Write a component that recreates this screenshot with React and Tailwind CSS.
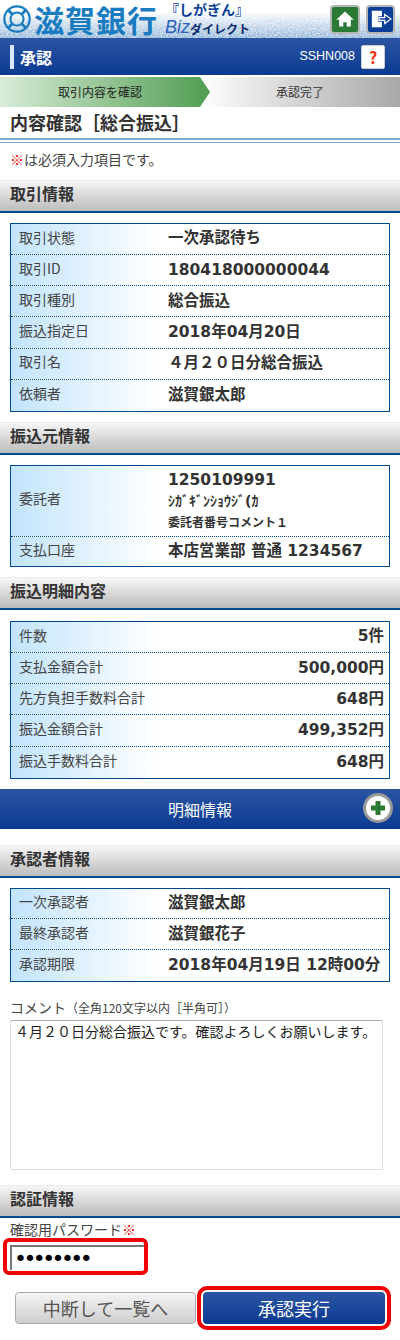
const Section = ({ title, className = "" }) => (
  <h2
    className={`h-[33px] border-t border-[#ececec] border-b-2 border-b-[#004a8f] bg-gradient-to-b from-[#f6f6f6] to-[#bcbcbc] pl-[10px] text-[16px] leading-[25px] font-bold text-[#333] ${className}`}
  >
    {title}
  </h2>
);

const Row = ({ label, children, h = "h-[31.17px]", right = false, last = false }) => (
  <div
    className={`grid grid-cols-[146px_1fr] ${h} ${last ? "" : "border-b border-dotted border-[#004a8f]"}`}
  >
    <div className="flex items-center bg-gradient-to-r from-[#c2e4fc] to-white pb-[4px] pl-2 text-[14px] text-[#444]">
      {label}
    </div>
    <div
      className={`flex items-center pr-[5px] pl-[11px] text-[15.5px] font-bold whitespace-nowrap text-[#333] font-['DejaVu_Sans','Noto_Sans_CJK_JP',sans-serif] ${right ? "justify-end" : ""}`}
    >
      <span>{children}</span>
    </div>
  </div>
);

const Table = ({ children, className = "" }) => (
  <div className={`mx-[10px] border border-[#004a8f] ${className}`}>{children}</div>
);

const HomeIcon = () => (
  <svg viewBox="0 0 24 24" className="h-[20px] w-[20px]" fill="white">
    <path d="M12 3 1.5 13H5v8h5v-5h4v5h5v-8h3.5z" />
  </svg>
);

const ExitIcon = () => (
  <svg viewBox="0 0 24 24" className="h-[22px] w-[22px]">
    <path d="M2 3h11v6H9v6h4v6H2z" fill="white" />
    <path d="M10 10.5h6V7l7 5-7 5v-3.5h-6z" fill="#0b3f97" stroke="white" strokeWidth="1.3" />
  </svg>
);

const LogoMark = () => (
  <svg viewBox="0 0 32 32" className="h-[30px] w-[30px] shrink-0" fill="none" stroke="#1a7cc0">
    <circle cx="16" cy="16" r="13.5" strokeWidth="2.4" />
    <circle cx="16" cy="16" r="7" strokeWidth="2.2" />
    <path d="M6.5 6.5 11 11M25.5 6.5 21 11M6.5 25.5 11 21M25.5 25.5 21 21" strokeWidth="3" />
  </svg>
);

const App = () => {
  return (
    <div className="relative h-[1340px] w-[400px] overflow-hidden bg-white font-['Noto_Sans_CJK_JP',sans-serif] text-[#333]">
      {/* header */}
      <header className="relative h-[38px] bg-gradient-to-b from-white from-30% to-[#8fb3d6]">
        <svg className="absolute inset-x-0 bottom-0 h-[26px] w-full opacity-70">
          <filter id="speckle">
            <feTurbulence type="fractalNoise" baseFrequency="0.8" numOctaves="2" />
            <feColorMatrix values="0 0 0 0 1  0 0 0 0 1  0 0 0 0 1  0 0 0 3 -1.2" />
          </filter>
          <rect width="100%" height="100%" filter="url(#speckle)" />
        </svg>
        <div className="relative flex h-full items-center pl-[2px]">
          <LogoMark />
          <span className="ml-[2px] w-[128px] text-[30px] leading-[30px] font-bold tracking-[1px] whitespace-nowrap text-[#1a7cc0]">
            滋賀銀行
          </span>
          <div className="ml-[3px] flex w-[84px] flex-col">
            <span className="h-[15px] text-[14px] leading-[15px] font-bold whitespace-nowrap text-[#0b3f97]">
              『しがぎん』
            </span>
            <div className="flex h-[20px] items-end whitespace-nowrap">
              <span className="font-['Liberation_Sans'] text-[18px] leading-[20px] text-[#2b62c0] italic">Biz</span>
              <span className="text-[12px] leading-[16px] font-bold text-[#0a2c6e]">ダイレクト</span>
            </div>
          </div>
          <a className="ml-auto flex h-[29px] w-[30px] items-center justify-center rounded-[4px] border-2 border-[#b5b5b5] bg-[#2a7a35]">
            <HomeIcon />
          </a>
          <a className="mr-[5px] ml-[6px] flex h-[29px] w-[29px] items-center justify-center rounded-[4px] border-2 border-[#b5b5b5] bg-[#0b3f97]">
            <ExitIcon />
          </a>
        </div>
      </header>

      {/* page title bar */}
      <div className="flex h-[37px] items-center bg-gradient-to-b from-[#2b55a3] to-[#0a3a92] pr-[15px] pl-[10px] text-white">
        <span className="h-[24px] w-[4px] bg-[#d8e8f8]" />
        <h1 className="ml-[6px] text-[16px] font-bold">承認</h1>
        <span className="ml-auto font-['Liberation_Sans'] text-[12.5px]">SSHN008</span>
        <button className="ml-[6px] flex h-[24px] w-[24px] items-center justify-center rounded-[2px] border border-[#ccc] bg-white text-[16px] leading-none font-bold text-[#f03010]">
          ?
        </button>
      </div>

      {/* steps */}
      <div className="mt-[2px] flex h-[30px] text-[12px]">
        <div className="relative z-10 flex w-[210px] items-center justify-center bg-gradient-to-r from-[#d8ecd8] to-[#4f9d52] pr-[10px] text-[#222] [clip-path:polygon(0_0,200px_0,210px_50%,200px_100%,0_100%)]">
          取引内容を確認
        </div>
        <div className="-ml-[10px] flex flex-1 items-center justify-center bg-gradient-to-r from-white to-[#a8a8a8] text-[#333]">
          承認完了
        </div>
      </div>

      <h2 className="h-[31px] pl-[10px] text-[18px] leading-[31px] font-bold text-[#333]">
        内容確認［総合振込］
      </h2>
      <div className="h-[5px] border-t-2 border-b border-[#7aa9d0]" />
      <p className="h-[37px] pl-[10px] text-[14px] leading-[32px] text-[#444]">
        <span className="text-[#f00000]">※</span>は必須入力項目です。
      </p>

      <Section title="取引情報" />
      <Table className="mt-[10px]">
        <Row label="取引状態">一次承認待ち</Row>
        <Row label="取引ID">180418000000044</Row>
        <Row label="取引種別">総合振込</Row>
        <Row label="振込指定日">2018年04月20日</Row>
        <Row label="取引名">４月２０日分総合振込</Row>
        <Row label="依頼者" last>滋賀銀太郎</Row>
      </Table>

      <Section title="振込元情報" className="mt-[10px]" />
      <Table className="mt-[10px]">
        <Row label="委託者" h="h-[71px]">
          <span className="block pt-[2px] leading-[24px]">1250109991</span>
          <span className="block text-[14px] leading-[18px]">ｼｶﾞｷﾞﾝｼｮｳｼﾞ(ｶ</span>
          <span className="block text-[12px] leading-[26px]">委託者番号コメント１</span>
        </Row>
        <Row label="支払口座" h="h-[29px]" last>本店営業部 普通 1234567</Row>
      </Table>

      <Section title="振込明細内容" className="mt-[10px]" />
      <Table className="mt-[11px]">
        <Row label="件数" right>5件</Row>
        <Row label="支払金額合計" right>500,000円</Row>
        <Row label="先方負担手数料合計" right>648円</Row>
        <Row label="振込金額合計" right>499,352円</Row>
        <Row label="振込手数料合計" right last>648円</Row>
      </Table>

      <button className="relative mt-[10px] flex h-[40px] w-full items-center justify-center bg-gradient-to-b from-[#2b55a3] to-[#0a3a92] text-[16px] text-white">
        明細情報
        <span className="absolute top-[4px] right-[7px] flex h-[30px] w-[30px] items-center justify-center rounded-full border-[3px] border-[#9a9a9a] bg-white">
          <svg viewBox="0 0 16 16" className="h-[16px] w-[16px]" fill="#2a7a35">
            <path d="M5.5 1h5v4.5H15v5h-4.5V15h-5v-4.5H1v-5h4.5z" />
          </svg>
        </span>
      </button>

      <Section title="承認者情報" className="mt-[16px]" />
      <Table className="mt-[10px]">
        <Row label="一次承認者" h="h-[30.67px]">滋賀銀太郎</Row>
        <Row label="最終承認者" h="h-[30.67px]">滋賀銀花子</Row>
        <Row label="承認期限" h="h-[30.67px]" last>2018年04月19日 12時00分</Row>
      </Table>

      <label className="mt-[17px] block h-[21px] pl-[10px] text-[14px] leading-[16px] text-[#444]">
        コメント
        <span className="text-[12px]">（全角120文字以内［半角可］）</span>
      </label>
      <textarea
        readOnly
        defaultValue="４月２０日分総合振込です。確認よろしくお願いします。"
        className="mx-[10px] block h-[150px] w-[373px] resize-none rounded-[2px] border border-[#ddd] border-t-[#aaa] px-[4px] py-0 text-[14px] leading-[20px] text-[#222] outline-none"
      />

      <Section title="認証情報" className="mt-[15px]" />
      <label className="mt-[3px] block h-[17px] pl-[10px] text-[14px] leading-[17px] text-[#444]">
        確認用パスワード<span className="text-[#f00000]">※</span>
      </label>
      <div className="ml-[3px] h-[37px] w-[145px] rounded-[6px] border-[4px] border-[#f00000] bg-white pt-[3px] pl-[3px]">
        <input
          type="password"
          readOnly
          defaultValue="12345678"
          className="block h-[25px] w-[134px] border-t-2 border-l-2 border-[#777] pl-[2px] font-['DejaVu_Sans'] text-[22px] tracking-[-3.6px] text-black outline-none"
        />
      </div>

      <div className="mt-[17px] flex gap-[7px] px-[15px]">
        <button className="h-[32px] w-[181px] rounded-[4px] border border-[#aaa] bg-gradient-to-b from-[#f4f4f4] to-[#cfcfcf] text-[18px] leading-none text-[#555]">
          中断して一覧へ
        </button>
        <button className="h-[32px] flex-1 rounded-[4px] bg-gradient-to-b from-[#2b55a3] to-[#0a3a92] text-[18px] leading-none text-white outline-4 outline-offset-[2px] outline-[#f00000]">
          承認実行
        </button>
      </div>
    </div>
  );
};

export default App;
